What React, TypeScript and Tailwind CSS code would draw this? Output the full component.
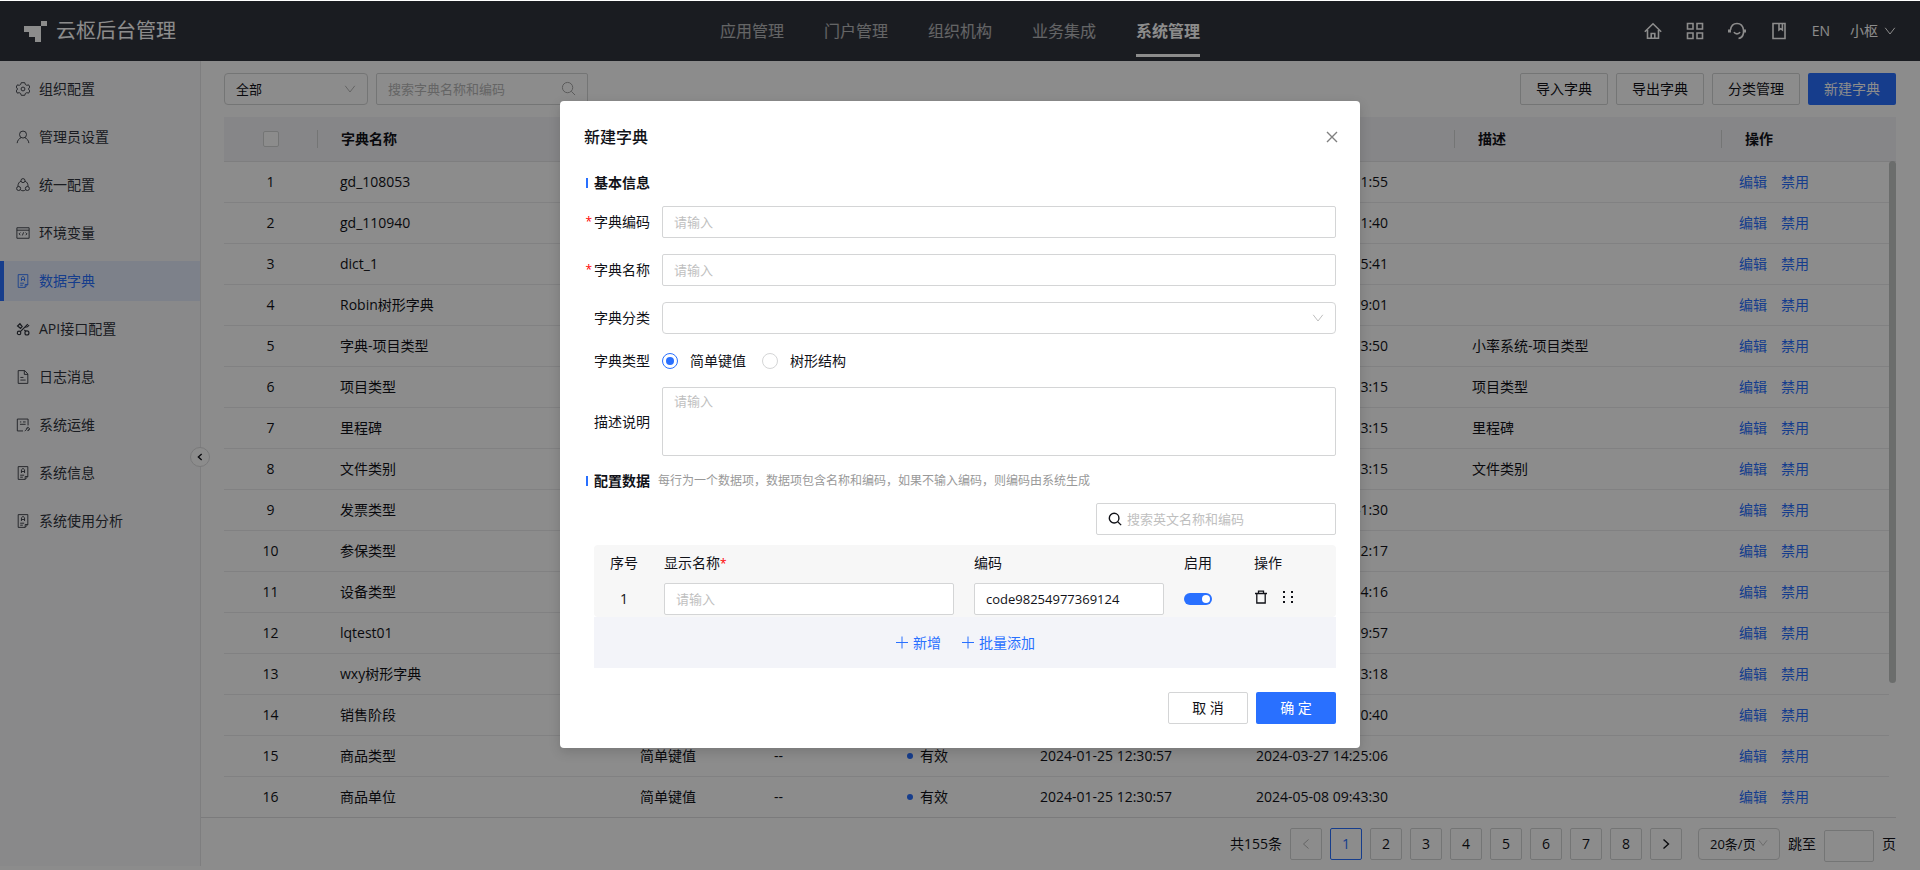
import {type ReactNode, useState} from 'react';
import clsx from 'clsx';

type IconProps = {className?: string};

const TOP_NAV = ['应用管理', '门户管理', '组织机构', '业务集成', '系统管理'];

const ROWS: {name: string; updated: string; desc?: string}[] = [
  {name: 'gd_108053', updated: '2024-06-14 10:31:55'},
  {name: 'gd_110940', updated: '2024-06-14 10:31:40'},
  {name: 'dict_1', updated: '2024-06-12 16:25:41'},
  {name: 'Robin树形字典', updated: '2024-06-06 11:29:01'},
  {name: '字典-项目类型', updated: '2024-06-05 17:13:50', desc: '小率系统-项目类型'},
  {name: '项目类型', updated: '2024-06-05 17:13:15', desc: '项目类型'},
  {name: '里程碑', updated: '2024-06-05 17:13:15', desc: '里程碑'},
  {name: '文件类别', updated: '2024-06-05 17:13:15', desc: '文件类别'},
  {name: '发票类型', updated: '2024-05-28 09:41:30'},
  {name: '参保类型', updated: '2024-05-24 15:02:17'},
  {name: '设备类型', updated: '2024-05-22 10:14:16'},
  {name: 'lqtest01', updated: '2024-05-20 14:19:57'},
  {name: 'wxy树形字典', updated: '2024-05-17 16:33:18'},
  {name: '销售阶段', updated: '2024-05-09 11:20:40'},
  {name: '商品类型', updated: '2024-03-27 14:25:06'},
  {name: '商品单位', updated: '2024-05-08 09:43:30'},
];

function Svg({
  children,
  className,
  viewBox = '0 0 16 16',
}: {
  children: ReactNode;
  className?: string;
  viewBox?: string;
}) {
  return (
    <svg
      aria-hidden
      className={className}
      viewBox={viewBox}
      fill="none"
      stroke="currentColor"
    >
      {children}
    </svg>
  );
}

function ChevronDown({className}: IconProps) {
  return (
    <Svg className={className} viewBox="0 0 12 12">
      <path d="M1.2 2.8 6 9l4.8-6.2" />
    </Svg>
  );
}

function ChevronLeft({className}: IconProps) {
  return (
    <Svg className={className} viewBox="0 0 12 12">
      <path d="M8.5 1.5 3.5 6l5 4.5" />
    </Svg>
  );
}

function SearchIcon({className}: IconProps) {
  return (
    <Svg className={className}>
      <circle cx="7" cy="7" r="5.5" />
      <path d="m11 11 4 4" />
    </Svg>
  );
}

function LogoIcon() {
  return (
    <svg aria-hidden className="h-[21px] w-6" viewBox="0 0 24 21" fill="#fff">
      <path d="M0 5h17v16h-6v-5H5v-5H0z" />
      <path d="M17 0h6v5h-6z" />
    </svg>
  );
}

function GearIcon({className}: IconProps) {
  return (
    <Svg className={className}>
      <path d="M6 .8h4l.7 2.1 1.6.9 2.2-.5 1.2 2.500L14.200 8l1.500 2.200-1.200 2.500-2.200-.5-1.600.9-.7 2.100H6l-.7-2.100-1.600-.9-2.200.5L.3 10.200 1.800 8 .3 5.800l1.200-2.500 2.200.5 1.600-.9z" />
      <circle cx="8" cy="8" r="2.200" />
    </Svg>
  );
}

function UserIcon({className}: IconProps) {
  return (
    <Svg className={className}>
      <circle cx="8" cy="5.200" r="4" />
      <path d="M1.300 15c.4-3.300 2.200-5.200 4.700-6.300M14.700 15c-.4-3.300-2.200-5.200-4.700-6.300" />
    </Svg>
  );
}

function NodesIcon({className}: IconProps) {
  return (
    <Svg className={className}>
      <circle cx="8" cy="3" r="2.300" />
      <circle cx="3" cy="12" r="2.300" />
      <circle cx="13" cy="12" r="2.300" />
      <path d="M5.800 3.500C3.500 4.500 2.200 6.500 2.200 9.700M10.200 3.500c2.300 1 3.600 3 3.600 6.200M5 13.500c1.800 1.500 4.200 1.500 6 0" />
    </Svg>
  );
}

function CodeIcon({className}: IconProps) {
  return (
    <Svg className={className}>
      <path d="M1 2h14v12H1zM1 4.800h14M5 7.500 3.500 9 5 10.500M11 7.500 12.500 9 11 10.500M8.700 7.200l-1.400 3.600" />
    </Svg>
  );
}

function DictIcon({className}: IconProps) {
  return (
    <Svg className={className}>
      <path d="M2.500.7h11v11.300l-3 3.300h-8zM13.500 12h-3v3.300M6.200 8V4.300L8 2.700l1.800 1.600V8M6.200 6.300h3.600M4.800 10.500h4.500M4.800 12.800h3" />
    </Svg>
  );
}

function ApiIcon({className}: IconProps) {
  return (
    <Svg className={className}>
      <path
        d="M5 11 13.500 2.500M4.500 2 1.800 4.500l3.400 2.700L7 5.200zM9.500 9l1.800 1.800"
        strokeWidth="1.400"
      />
      <circle cx="12.500" cy="12.500" r="2.300" strokeWidth="1.300" />
      <circle cx="3.500" cy="12.500" r="2" strokeWidth="1.300" />
      <path d="m10.500 6 2.500-.5L15 3.500" strokeWidth="1.300" />
    </Svg>
  );
}

function FileIcon({className}: IconProps) {
  return (
    <Svg className={className}>
      <path d="M2.500.7H10l3.500 3.800v10.800h-11zM9.500.7V5h4M5 8.500h3.500M5 11.500h6" />
    </Svg>
  );
}

function OpsIcon({className}: IconProps) {
  return (
    <Svg className={className}>
      <path d="M8 14.800H1.500V1.200h12.300v7.300M4.500 4.500H6M8 4.500h3M4.500 7.200h6.500M10 14.800l2-1.600c-.4-1.700.7-2.800 2.200-2.500l-.9 1.300.9.900 1.300-.9c.2 1.600-1 2.800-2.500 2.400" />
    </Svg>
  );
}

function HomeIcon() {
  return (
    <Svg className="size-[18px] stroke-[1.6]" viewBox="0 0 18 18">
      <path d="M.8 9.800 9 1.800l8.200 8M3.500 8v8.200h11V8M7.200 16v-4.500h3.600V16" />
    </Svg>
  );
}

function GridIcon() {
  return (
    <Svg className="size-[18px] stroke-[1.6]" viewBox="0 0 18 18">
      <path d="M1.500 1.500H7V7H1.500zM11 1.500h5.500V7H11zM1.500 11H7v5.500H1.500zM11 11h5.500v5.500H11z" />
    </Svg>
  );
}

function HeadsetIcon() {
  return (
    <Svg className="size-[18px] stroke-[1.6]" viewBox="0 0 18 18">
      <path d="M2.500 8C3 4 5.700 1.500 9 1.500S15 4 15.500 8v3c-.5 3-2.500 5-5 5.500M6 10c1.200 2.500 4.800 2.500 6 0" />
      <path d="M1.500 7.500v3M16.500 7.500v3" strokeWidth="3" />
    </Svg>
  );
}

function BookIcon() {
  return (
    <Svg className="size-[18px] stroke-[1.6]" viewBox="0 0 18 18">
      <path d="M3 1.500h12v15H3zM9 2v6l1.700-1.300L12.400 8V2" />
    </Svg>
  );
}

const SIDE_NAV: {label: string; Icon: (props: IconProps) => ReactNode}[] = [
  {label: '组织配置', Icon: GearIcon},
  {label: '管理员设置', Icon: UserIcon},
  {label: '统一配置', Icon: NodesIcon},
  {label: '环境变量', Icon: CodeIcon},
  {label: '数据字典', Icon: DictIcon},
  {label: 'API接口配置', Icon: ApiIcon},
  {label: '日志消息', Icon: FileIcon},
  {label: '系统运维', Icon: OpsIcon},
  {label: '系统信息', Icon: DictIcon},
  {label: '系统使用分析', Icon: DictIcon},
];

function Header() {
  return (
    <header className="flex h-[60px] shrink-0 items-center bg-[#31333c] px-6 text-white">
      <div className="flex flex-1 items-center gap-2">
        <LogoIcon />
        <span className="text-xl">云枢后台管理</span>
      </div>
      <nav className="flex h-full gap-10 text-base">
        {TOP_NAV.map((label) => (
          <a
            key={label}
            href="#"
            className={clsx(
              'flex h-full flex-col justify-between',
              label === '系统管理' ? 'font-bold' : 'text-white/65',
            )}
          >
            <span className="pt-[18px] leading-6">{label}</span>
            {label === '系统管理' && <span className="mb-1 h-[3px] bg-white" />}
          </a>
        ))}
      </nav>
      <div className="flex flex-1 items-center justify-end gap-6 text-white">
        <button aria-label="首页">
          <HomeIcon />
        </button>
        <button aria-label="应用">
          <GridIcon />
        </button>
        <button aria-label="客服">
          <HeadsetIcon />
        </button>
        <button aria-label="文档">
          <BookIcon />
        </button>
        <button className="text-sm">EN</button>
        <button className="-ml-1 flex items-center gap-1.5 text-sm">
          小枢
          <ChevronDown className="size-3" />
        </button>
      </div>
    </header>
  );
}

function Sidebar() {
  return (
    <aside className="relative w-[201px] shrink-0 border-r border-[#e6e6e8] bg-[#fafafb] pt-2">
      <ul className="flex flex-col gap-2">
        {SIDE_NAV.map(({label, Icon}) => {
          const active = label === '数据字典';
          return (
            <li key={label}>
              <a
                href="#"
                className={clsx(
                  'flex h-10 items-center gap-[9px] border-l-4 pl-3',
                  active
                    ? 'border-[#2970ff] bg-[#e3ecfc] text-[#2970ff]'
                    : 'border-transparent text-[#30333d]',
                )}
              >
                <Icon className="size-3.5" />
                {label}
              </a>
            </li>
          );
        })}
      </ul>
      <button
        aria-label="收起菜单"
        className="absolute -right-2.5 top-[386px] flex size-5 items-center justify-center rounded-full border border-[#dcdcde] bg-white"
      >
        <ChevronLeft className="size-2 stroke-2" />
      </button>
    </aside>
  );
}

function Toolbar() {
  return (
    <div className="flex items-center gap-2">
      <div className="relative w-36">
        <select
          aria-label="字典分类"
          className="h-8 w-full appearance-none rounded border border-[#d4d5d6] bg-white px-[11px] text-[13px]"
        >
          <option>全部</option>
        </select>
        <ChevronDown className="pointer-events-none absolute right-3 top-2.5 size-3 text-[#b8b8b8]" />
      </div>
      <div className="relative w-[212px]">
        <input
          aria-label="搜索字典名称和编码"
          placeholder="搜索字典名称和编码"
          className="h-8 w-full rounded-xs border border-[#d4d5d6] bg-white pl-[11px] pr-8 text-[13px] placeholder:text-[#b8b8b8]"
        />
        <SearchIcon className="absolute right-3 top-2 size-[15px] text-[#a0a0a0]" />
      </div>
      <div className="ml-auto flex gap-2">
        {['导入字典', '导出字典', '分类管理'].map((label) => (
          <button
            key={label}
            className="h-8 w-22 rounded-xs border border-[#d4d5d6] bg-white"
          >
            {label}
          </button>
        ))}
        <button className="h-8 w-22 rounded-xs bg-[#2970ff] text-white">
          新建字典
        </button>
      </div>
    </div>
  );
}

function HeadCell({children}: {children: ReactNode}) {
  return (
    <th className="p-0 text-left font-bold">
      <span className="block border-l border-[#d4d5d6] pl-[23px] leading-[18px]">
        {children}
      </span>
    </th>
  );
}

function DictTable() {
  return (
    <div className="relative mt-3 flex-1">
      <table className="w-full table-fixed border-collapse">
        <colgroup>
          <col className="w-[93px]" />
          <col className="w-[305px]" />
          <col className="w-[134px]" />
          <col className="w-[133px]" />
          <col className="w-[133px]" />
          <col className="w-[216px]" />
          <col className="w-[216px]" />
          <col />
          <col className="w-[168px]" />
          <col className="w-[7px]" />
        </colgroup>
        <thead className="bg-[#f4f4f7]">
          <tr className="h-11 border-b border-[#e6e6e8]">
            <th className="p-0 align-middle">
              <input
                type="checkbox"
                aria-label="全选"
                className="mx-auto block size-4 appearance-none rounded-xs border border-[#d4d5d6] bg-white"
              />
            </th>
            <HeadCell>字典名称</HeadCell>
            <HeadCell>字典类型</HeadCell>
            <HeadCell>字典分类</HeadCell>
            <HeadCell>状态</HeadCell>
            <HeadCell>创建时间</HeadCell>
            <HeadCell>修改时间</HeadCell>
            <HeadCell>描述</HeadCell>
            <HeadCell>操作</HeadCell>
            <th />
          </tr>
        </thead>
        <tbody>
          {ROWS.map((row, index) => (
            <tr
              key={row.name}
              className="h-[41px] *:border-b *:border-[#ebebed] *:p-0 *:pl-[18px] *:last:border-0"
            >
              <td className="!pl-0 text-center">{index + 1}</td>
              <td className="!pl-[23px]">{row.name}</td>
              <td>简单键值</td>
              <td>--</td>
              <td>
                <span className="flex items-center gap-[7px]">
                  <i className="size-1.5 rounded-full bg-[#2970ff]" />
                  有效
                </span>
              </td>
              <td>2024-01-25 12:30:57</td>
              <td>{row.updated}</td>
              <td>{row.desc}</td>
              <td className="text-[#2970ff]">
                <span className="flex gap-3.5">
                  <a href="#">编辑</a>
                  <a href="#">禁用</a>
                </span>
              </td>
              <td />
            </tr>
          ))}
        </tbody>
      </table>
      {/* Scrollbar thumb */}
      <div className="absolute right-0 top-11 h-[522px] w-[7px] rounded-full bg-[#c3c6c5]" />
    </div>
  );
}

function Pagination() {
  return (
    <div className="relative -ml-[23px] -mt-px flex h-[49px] border-t border-[#e0e0e2] bg-white pt-2.5">
      <div className="ml-auto flex h-8 items-center gap-2">
        <span>共155条</span>
        <button
          aria-label="上一页"
          className="flex size-8 items-center justify-center rounded-xs border border-[#d4d5d6] text-[#b8b8b8]"
        >
          <ChevronLeft className="size-3" />
        </button>
        {[1, 2, 3, 4, 5, 6, 7, 8].map((page) => (
          <button
            key={page}
            className={clsx(
              'size-8 rounded-xs border',
              page === 1
                ? 'border-[#2970ff] text-[#2970ff]'
                : 'border-[#d4d5d6]',
            )}
          >
            {page}
          </button>
        ))}
        <button
          aria-label="下一页"
          className="flex size-8 items-center justify-center rounded-xs border border-[#d4d5d6]"
        >
          <ChevronLeft className="size-3 rotate-180 stroke-[1.4]" />
        </button>
        <div className="relative ml-2">
          <select
            aria-label="每页条数"
            className="h-8 w-[82px] appearance-none rounded border border-[#d4d5d6] bg-white pl-[11px] text-[13px]"
          >
            <option>20条/页</option>
          </select>
          <ChevronDown className="pointer-events-none absolute right-3 top-2.5 size-2.5 text-[#b8b8b8]" />
        </div>
        <label htmlFor="jump">跳至</label>
        <input
          id="jump"
          className="mt-1 h-8 w-[50px] rounded-xs border border-[#d4d5d6] bg-white"
        />
        <span>页</span>
      </div>
    </div>
  );
}

function SectionTitle({children}: {children: ReactNode}) {
  return (
    <h3 className="flex items-center gap-1.5 pl-0.5 font-bold leading-[22px]">
      <i className="h-2.5 w-0.5 bg-[#2970ff]" />
      {children}
    </h3>
  );
}

function Field({
  label,
  htmlFor,
  required,
  children,
}: {
  label: string;
  htmlFor?: string;
  required?: boolean;
  children: ReactNode;
}) {
  return (
    <div className="flex items-center">
      <label
        htmlFor={htmlFor}
        className="flex w-[66px] shrink-0 items-center justify-end"
      >
        {required && <span className="pr-0.5 text-xs text-[#ff0000]">*</span>}
        {label}
      </label>
      <div className="ml-3 flex-1">{children}</div>
    </div>
  );
}

function Radio({
  label,
  checked,
  onChange,
}: {
  label: string;
  checked: boolean;
  onChange: () => void;
}) {
  return (
    <label className="flex items-center gap-3">
      <input
        type="radio"
        name="dict-type"
        checked={checked}
        onChange={onChange}
        className="size-4 appearance-none rounded-full border border-[#d4d5d6] bg-clip-content p-[3px] checked:border-[#2970ff] checked:bg-[#2970ff]"
      />
      {label}
    </label>
  );
}

function PlusIcon() {
  return (
    <Svg className="size-3.5" viewBox="0 0 14 14">
      <path d="M1 6.500h12M7 .5v12" />
    </Svg>
  );
}

const INPUT =
  'block h-8 w-full rounded-xs border border-[#d4d5d6] bg-white px-[11px] text-[13px] placeholder:text-[#bfbfbf]';

function ConfigTable() {
  const [enabled, setEnabled] = useState(true);

  return (
    <div className="ml-2.5">
      <table className="w-full table-fixed rounded bg-[#f7f7f7]">
        <colgroup>
          <col className="w-[70px]" />
          <col />
          <col className="w-[210px]" />
          <col className="w-[70px]" />
          <col className="w-[82px]" />
        </colgroup>
        <thead>
          <tr className="h-9 *:p-0 *:text-left *:font-normal">
            <th className="!pl-4">序号</th>
            <th>
              显示名称<span className="text-xs text-[#ff0000]">*</span>
            </th>
            <th>编码</th>
            <th>启用</th>
            <th>操作</th>
          </tr>
        </thead>
        <tbody>
          <tr className="h-9 *:p-0">
            <td className="!pl-[26px]">1</td>
            <td className="!pr-5">
              <input aria-label="显示名称" placeholder="请输入" className={INPUT} />
            </td>
            <td className="!pr-5">
              <input
                aria-label="编码"
                defaultValue="code98254977369124"
                className={INPUT}
              />
            </td>
            <td>
              <button
                role="switch"
                aria-checked={enabled}
                aria-label="启用"
                onClick={() => setEnabled(!enabled)}
                className={clsx(
                  'flex h-3 w-7 items-center rounded-full px-0.5',
                  enabled ? 'justify-end bg-[#2970ff]' : 'bg-[#bfbfbf]',
                )}
              >
                <span className="size-2 rounded-full bg-white" />
              </button>
            </td>
            <td>
              <span className="flex items-center gap-3.5 pb-1">
                <button aria-label="删除">
                  <Svg className="size-3.5" viewBox="0 0 14 14">
                    <path
                      d="M1 3.500h12M2.800 3.500v9.500h8.400V3.500M4.500 3.500V1.200h5v2.300"
                      strokeWidth="1.300"
                    />
                  </Svg>
                </button>
                <button aria-label="拖动">
                  <svg
                    aria-hidden
                    className="h-3.5 w-3"
                    viewBox="0 0 12 14"
                    fill="currentColor"
                  >
                    <path d="M1 1h2v2H1zM9 1h2v2H9zM1 6h2v2H1zM9 6h2v2H9zM1 11h2v2H1zM9 11h2v2H9z" />
                  </svg>
                </button>
              </span>
            </td>
          </tr>
        </tbody>
      </table>
      <div className="flex h-[51px] items-center justify-center gap-5 bg-[#f3f4f9] text-[#2970ff]">
        <button className="flex items-center gap-1">
          <PlusIcon />
          新增
        </button>
        <button className="flex items-center gap-1">
          <PlusIcon />
          批量添加
        </button>
      </div>
    </div>
  );
}

function CreateDialog() {
  const [dictType, setDictType] = useState('简单键值');

  return (
    <div className="absolute inset-x-0 bottom-0 top-px flex items-start justify-center bg-black/45 pt-[100px]">
      <div
        role="dialog"
        aria-modal
        aria-labelledby="dialog-title"
        className="w-[800px] rounded bg-white px-6 pb-6 shadow-[0_4px_12px_rgba(0,0,0,0.15)]"
      >
        <div className="flex h-[71px] items-center justify-between">
          <h2 id="dialog-title" className="text-base font-medium">
            新建字典
          </h2>
          <button aria-label="关闭" className="-mr-2 p-1.5 text-[#808080]">
            <Svg className="size-3" viewBox="0 0 12 12">
              <path d="m1 1 10 10M11 1 1 11" strokeWidth="1.400" />
            </Svg>
          </button>
        </div>
        <SectionTitle>基本信息</SectionTitle>
        <div className="mt-3 flex flex-col gap-4">
          <Field label="字典编码" htmlFor="code" required>
            <input id="code" placeholder="请输入" className={INPUT} />
          </Field>
          <Field label="字典名称" htmlFor="name" required>
            <input id="name" placeholder="请输入" className={INPUT} />
          </Field>
          <Field label="字典分类" htmlFor="category">
            <div className="relative">
              <select
                id="category"
                className="block h-8 w-full appearance-none rounded border border-[#d4d5d6] bg-white px-3"
              />
              <ChevronDown className="pointer-events-none absolute right-3 top-2.5 size-3 text-[#bfbfbf]" />
            </div>
          </Field>
          <Field label="字典类型">
            <div className="flex gap-4 leading-[21px]">
              {['简单键值', '树形结构'].map((label) => (
                <Radio
                  key={label}
                  label={label}
                  checked={dictType === label}
                  onChange={() => setDictType(label)}
                />
              ))}
            </div>
          </Field>
          <Field label="描述说明" htmlFor="desc">
            <textarea
              id="desc"
              placeholder="请输入"
              className="block h-[69px] w-full resize-none rounded-xs border border-[#d4d5d6] px-[11px] py-1 text-[13px] placeholder:text-[#bfbfbf]"
            />
          </Field>
        </div>
        <div className="mt-3.5 flex items-center gap-2">
          <SectionTitle>配置数据</SectionTitle>
          <span className="text-xs text-[#999]">
            每行为一个数据项，数据项包含名称和编码，如果不输入编码，则编码由系统生成
          </span>
        </div>
        <div className="relative ml-auto mb-2.5 mt-[11px] w-60">
          <SearchIcon className="absolute left-3 top-[9px] size-3.5 stroke-[1.6]" />
          <input
            aria-label="搜索英文名称和编码"
            placeholder="搜索英文名称和编码"
            className="block h-8 w-full rounded-xs border border-[#d4d5d6] pl-[30px] pr-3 text-[13px] placeholder:text-[#bfbfbf]"
          />
        </div>
        <ConfigTable />
        <div className="mt-6 flex justify-end gap-2">
          <button className="h-8 w-20 rounded-xs border border-[#d4d5d6]">
            取 消
          </button>
          <button className="h-8 w-20 rounded-xs bg-[#2970ff] text-white">
            确 定
          </button>
        </div>
      </div>
    </div>
  );
}

export default function App() {
  return (
    <div className="relative flex min-h-screen flex-col bg-white pb-1 pt-px font-['Open_Sans','Noto_Sans_CJK_SC',sans-serif] text-sm text-[#111218]">
      <Header />
      <div className="flex flex-1">
        <Sidebar />
        <main className="flex min-w-0 flex-1 flex-col pl-[23px] pr-6 pt-3">
          <Toolbar />
          <DictTable />
          <Pagination />
        </main>
      </div>
      <CreateDialog />
    </div>
  );
}
